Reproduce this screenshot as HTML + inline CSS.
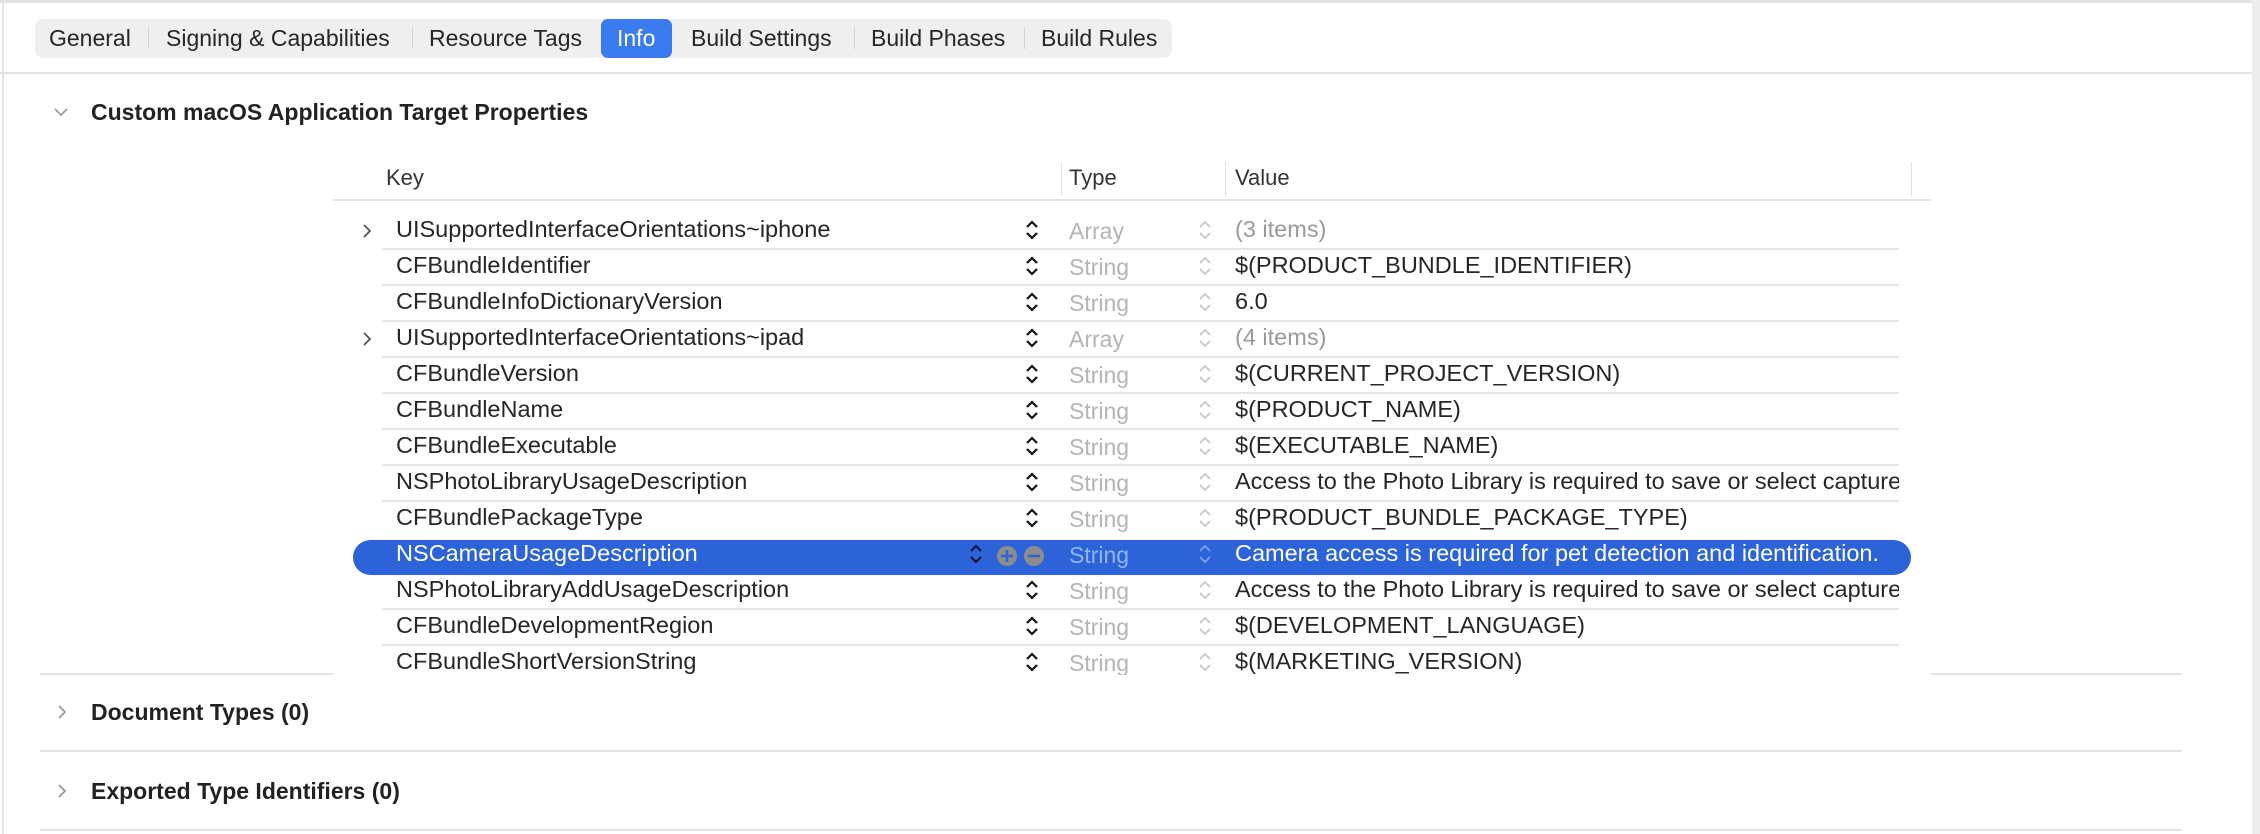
<!DOCTYPE html>
<html><head><meta charset="utf-8"><style>
*{margin:0;padding:0;box-sizing:border-box}
body{width:2260px;height:834px;background:#fff;position:relative;overflow:hidden;font-family:"Liberation Sans",sans-serif;color:#262626}
.a{position:absolute;white-space:nowrap}
.hl{position:absolute;height:2px;background:#e3e3e3}
.tab{position:absolute;top:19px;height:39px;line-height:39px;font-size:23px;color:#262626}
.sep{position:absolute;top:27px;width:1px;height:22px;background:#d4d4d4}
.row{position:absolute;left:0;width:2260px;height:36px}
.k{position:absolute;left:396px;top:3px;font-size:23.5px;white-space:nowrap}
.t{position:absolute;left:1069px;top:5px;font-size:23px;color:#b4b4b4}
.v{position:absolute;left:1235px;top:3px;font-size:23.5px;width:664px;overflow:hidden;white-space:nowrap}
.rl{position:absolute;left:382px;width:1517px;top:35px;height:2px;background:#e6e6e6}
.st{position:absolute;left:1024px;top:5px}
.st2{position:absolute;left:1197px;top:5px}
.dis{position:absolute;left:362px;top:10px}
.h{position:absolute;font-weight:bold;font-size:23px;color:#222}
</style></head><body>
<div class="a" style="left:0;top:0;width:2260px;height:3px;background:#e2e2e2"></div>
<div class="a" style="top:0;width:2px;height:834px;background:#e6e6e6;left:2px"></div>
<div class="a" style="left:2252px;top:0;width:8px;height:834px;background:#ececec"></div>
<div class="a" style="left:35px;top:19px;width:1137px;height:39px;background:#efefef;border-radius:8px"></div>
<div class="a" style="left:601px;top:19px;width:71px;height:39px;background:#3a7bf0;border-radius:7px"></div>
<div class="tab" style="left:49px">General</div>
<div class="sep" style="left:148px"></div>
<div class="tab" style="left:166px">Signing &amp; Capabilities</div>
<div class="sep" style="left:412px"></div>
<div class="tab" style="left:429px">Resource Tags</div>
<div class="tab" style="left:617px;color:#fff">Info</div>
<div class="tab" style="left:691px">Build Settings</div>
<div class="sep" style="left:854px"></div>
<div class="tab" style="left:871px">Build Phases</div>
<div class="sep" style="left:1024px"></div>
<div class="tab" style="left:1041px">Build Rules</div>
<div class="hl" style="left:0;top:72px;width:2252px"></div>

<svg class="a" style="left:53px;top:106px" width="16" height="12"><path d="M2 3l6 6 6-6" stroke="#999" stroke-width="1.8" fill="none"/></svg>
<div class="h" style="left:91px;top:99px">Custom macOS Application Target Properties</div>

<div class="a" style="left:386px;top:165px;font-size:22px;color:#333">Key</div>
<div class="a" style="left:1061px;top:162px;width:1px;height:34px;background:#e0e0e0"></div>
<div class="a" style="left:1069px;top:165px;font-size:22px;color:#333">Type</div>
<div class="a" style="left:1225px;top:162px;width:1px;height:34px;background:#e0e0e0"></div>
<div class="a" style="left:1235px;top:165px;font-size:22px;color:#333">Value</div>
<div class="a" style="left:1911px;top:162px;width:1px;height:34px;background:#e0e0e0"></div>
<div class="hl" style="left:333px;top:199px;width:1598px"></div>

<svg width="0" height="0" style="position:absolute"><defs>
<g id="sd"><path d="M3 9l5-5 5 5M3 15l5 5 5-5" stroke="#111" stroke-width="2.2" fill="none"/></g>
<g id="sl"><path d="M3 9l5-5 5 5M3 15l5 5 5-5" stroke="#c4c4c4" stroke-width="1.6" fill="none"/></g>
<g id="ch"><path d="M2 2l6 6-6 6" stroke="#555" stroke-width="1.8" fill="none"/></g>
</defs></svg>

<div class="row" style="top:213px"><svg class="dis" width="12" height="18"><use href="#ch"/></svg><div class="k">UISupportedInterfaceOrientations~iphone</div><svg class="st" width="16" height="26"><use href="#sd"/></svg><div class="t">Array</div><svg class="st2" width="16" height="26"><use href="#sl"/></svg><div class="v" style="color:#999">(3 items)</div><div class="rl"></div></div>
<div class="row" style="top:249px"><div class="k">CFBundleIdentifier</div><svg class="st" width="16" height="26"><use href="#sd"/></svg><div class="t">String</div><svg class="st2" width="16" height="26"><use href="#sl"/></svg><div class="v">$(PRODUCT_BUNDLE_IDENTIFIER)</div><div class="rl"></div></div>
<div class="row" style="top:285px"><div class="k">CFBundleInfoDictionaryVersion</div><svg class="st" width="16" height="26"><use href="#sd"/></svg><div class="t">String</div><svg class="st2" width="16" height="26"><use href="#sl"/></svg><div class="v">6.0</div><div class="rl"></div></div>
<div class="row" style="top:321px"><svg class="dis" width="12" height="18"><use href="#ch"/></svg><div class="k">UISupportedInterfaceOrientations~ipad</div><svg class="st" width="16" height="26"><use href="#sd"/></svg><div class="t">Array</div><svg class="st2" width="16" height="26"><use href="#sl"/></svg><div class="v" style="color:#999">(4 items)</div><div class="rl"></div></div>
<div class="row" style="top:357px"><div class="k">CFBundleVersion</div><svg class="st" width="16" height="26"><use href="#sd"/></svg><div class="t">String</div><svg class="st2" width="16" height="26"><use href="#sl"/></svg><div class="v">$(CURRENT_PROJECT_VERSION)</div><div class="rl"></div></div>
<div class="row" style="top:393px"><div class="k">CFBundleName</div><svg class="st" width="16" height="26"><use href="#sd"/></svg><div class="t">String</div><svg class="st2" width="16" height="26"><use href="#sl"/></svg><div class="v">$(PRODUCT_NAME)</div><div class="rl"></div></div>
<div class="row" style="top:429px"><div class="k">CFBundleExecutable</div><svg class="st" width="16" height="26"><use href="#sd"/></svg><div class="t">String</div><svg class="st2" width="16" height="26"><use href="#sl"/></svg><div class="v">$(EXECUTABLE_NAME)</div><div class="rl"></div></div>
<div class="row" style="top:465px"><div class="k">NSPhotoLibraryUsageDescription</div><svg class="st" width="16" height="26"><use href="#sd"/></svg><div class="t">String</div><svg class="st2" width="16" height="26"><use href="#sl"/></svg><div class="v">Access to the Photo Library is required to save or select captured images.</div><div class="rl"></div></div>
<div class="row" style="top:501px"><div class="k">CFBundlePackageType</div><svg class="st" width="16" height="26"><use href="#sd"/></svg><div class="t">String</div><svg class="st2" width="16" height="26"><use href="#sl"/></svg><div class="v">$(PRODUCT_BUNDLE_PACKAGE_TYPE)</div></div>
<div class="a" style="left:353px;top:540px;width:1558px;height:35px;background:#2d63d9;border-radius:18px"></div>
<div class="row" style="top:537px;color:#fff"><div class="k">NSCameraUsageDescription</div>
<svg class="a" style="left:968px;top:5px" width="16" height="26"><path d="M3 9l5-5 5 5M3 15l5 5 5-5" stroke="#0d1a3a" stroke-width="2.2" fill="none"/></svg>
<svg class="a" style="left:996px;top:8px" width="50" height="22"><circle cx="11" cy="11" r="10" fill="#8c8c8c"/><path d="M11 5v12M5 11h12" stroke="#2d63d9" stroke-width="2.4"/><circle cx="38" cy="11" r="10" fill="#8c8c8c"/><path d="M32 11h12" stroke="#2d63d9" stroke-width="2.4"/></svg>
<div class="t" style="color:#8fb6f7">String</div><svg class="st2" width="16" height="26"><path d="M3 9l5-5 5 5M3 15l5 5 5-5" stroke="#7fa6ee" stroke-width="1.6" fill="none"/></svg><div class="v" style="color:#fff">Camera access is required for pet detection and identification.</div></div>
<div class="row" style="top:573px"><div class="k">NSPhotoLibraryAddUsageDescription</div><svg class="st" width="16" height="26"><use href="#sd"/></svg><div class="t">String</div><svg class="st2" width="16" height="26"><use href="#sl"/></svg><div class="v">Access to the Photo Library is required to save or select captured images.</div><div class="rl"></div></div>
<div class="row" style="top:609px"><div class="k">CFBundleDevelopmentRegion</div><svg class="st" width="16" height="26"><use href="#sd"/></svg><div class="t">String</div><svg class="st2" width="16" height="26"><use href="#sl"/></svg><div class="v">$(DEVELOPMENT_LANGUAGE)</div><div class="rl"></div></div>
<div class="a" style="left:333px;top:645px;width:1598px;height:30px;overflow:hidden">
<div class="row" style="top:0;left:-333px"><div class="k">CFBundleShortVersionString</div><svg class="st" width="16" height="26"><use href="#sd"/></svg><div class="t">String</div><svg class="st2" width="16" height="26"><use href="#sl"/></svg><div class="v">$(MARKETING_VERSION)</div></div>
</div>
<div class="hl" style="left:40px;top:673px;width:293px"></div>
<div class="hl" style="left:1931px;top:673px;width:251px"></div>

<svg class="a" style="left:56px;top:703px" width="12" height="18"><path d="M3 3l6 6-6 6" stroke="#999" stroke-width="1.8" fill="none"/></svg>
<div class="h" style="left:91px;top:699px">Document Types (0)</div>
<div class="hl" style="left:40px;top:750px;width:2142px"></div>
<svg class="a" style="left:56px;top:782px" width="12" height="18"><path d="M3 3l6 6-6 6" stroke="#999" stroke-width="1.8" fill="none"/></svg>
<div class="h" style="left:91px;top:778px">Exported Type Identifiers (0)</div>
<div class="hl" style="left:40px;top:829px;width:2142px"></div>
</body></html>
